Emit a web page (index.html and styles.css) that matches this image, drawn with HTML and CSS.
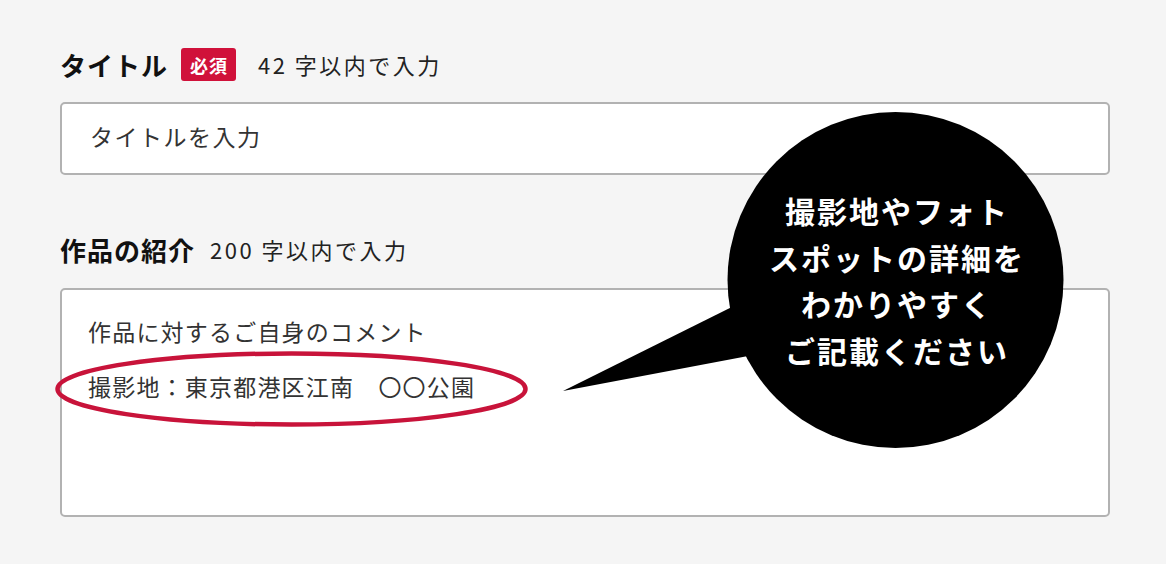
FILE: index.html
```html
<!DOCTYPE html>
<html lang="ja">
<head>
<meta charset="utf-8">
<title>作品投稿フォーム</title>
<link rel="stylesheet" href="styles.css">
</head>
<body>
<main class="form">
  <section class="field">
    <div class="field-head">
      <span class="field-name">タイトル</span>
      <span class="badge">必須</span>
      <span class="hint">42 字以内で入力</span>
    </div>
    <div class="input">タイトルを入力</div>
  </section>
  <section class="field field-intro">
    <div class="field-head">
      <span class="field-name">作品の紹介</span>
      <span class="hint hint-plain">200 字以内で入力</span>
    </div>
    <div class="textarea">
      <p class="line">作品に対するご自身のコメント</p>
      <p class="line">撮影地：東京都港区江南　〇〇公園</p>
    </div>
  </section>
</main>
<svg class="annotations" width="1166" height="564" viewBox="0 0 1166 564" aria-hidden="true">
  <ellipse cx="291.5" cy="389" rx="234" ry="35.5" fill="none" stroke="#c8133a" stroke-width="4.5"/>
  <polygon points="563,391 760,293 790,348" fill="#000"/>
  <circle cx="895.5" cy="280" r="168" fill="#000"/>
</svg>
<div class="bubble-text">
  <span>撮影地やフォト</span>
  <span>スポットの詳細を</span>
  <span>わかりやすく</span>
  <span>ご記載ください</span>
</div>
</body>
</html>
```
FILE: styles.css
```css
html, body {
  margin: 0;
  padding: 0;
}
body {
  width: 1166px;
  height: 564px;
  background: #f5f5f5;
  position: relative;
  overflow: hidden;
  font-family: "Noto Sans CJK JP", "Noto Sans", sans-serif;
  color: #1a1a1a;
}
.form {
  padding: 48px 56px 0 60px;
}
.field-head {
  display: flex;
  align-items: center;
  height: 33px;
}
.field-name {
  font-size: 26px;
  font-weight: 700;
  letter-spacing: 1px;
  line-height: 33px;
  margin-right: 13px;
  color: #111;
}
.badge {
  display: flex;
  align-items: center;
  justify-content: center;
  height: 33px;
  padding: 0 8px 0 9px;
  background: #d0113a;
  color: #fff;
  border-radius: 3px;
  font-size: 18px;
  font-weight: 700;
  letter-spacing: 1px;
  margin-right: 22px;
}
.hint {
  font-size: 22px;
  letter-spacing: 2.5px;
  line-height: 33px;
  color: #222;
}
.hint-plain {
  margin-left: 2px;
}
.input {
  margin-top: 21px;
  box-sizing: border-box;
  height: 73px;
  border: 2px solid #b2b2b2;
  border-radius: 5px;
  background: #fff;
  display: flex;
  align-items: center;
  padding: 0 0 6px 28px;
  font-size: 23px;
  letter-spacing: 1.5px;
  color: #333;
}
.field-intro {
  margin-top: 58px;
}
.textarea {
  margin-top: 22px;
  box-sizing: border-box;
  height: 229px;
  border: 2px solid #b2b2b2;
  border-radius: 5px;
  background: #fff;
  padding: 14px 0 0 26px;
  font-size: 23px;
  letter-spacing: 1.2px;
  color: #333;
}
.line {
  margin: 0;
  line-height: 55px;
}
.annotations {
  position: absolute;
  left: 0;
  top: 0;
  pointer-events: none;
}
.bubble-text {
  position: absolute;
  left: 727px;
  top: 112px;
  width: 338px;
  height: 336px;
  display: flex;
  flex-direction: column;
  align-items: center;
  justify-content: center;
  color: #fff;
  font-size: 30px;
  font-weight: 700;
  letter-spacing: 2px;
  line-height: 46.5px;
  text-indent: 2px;
}
```
